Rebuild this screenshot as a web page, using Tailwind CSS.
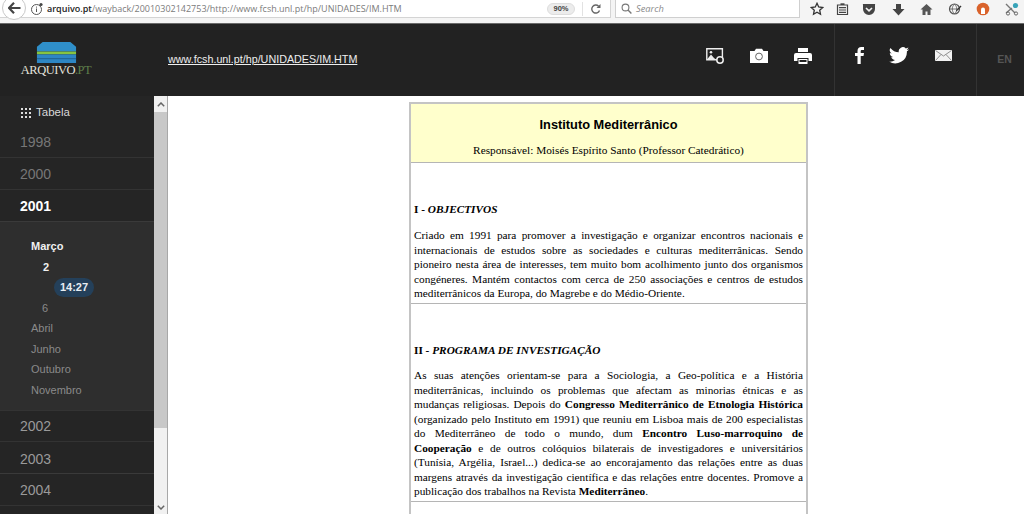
<!doctype html>
<html lang="pt">
<head>
<meta charset="utf-8">
<script src="https://cdn.jsdelivr.net/npm/@tailwindcss/browser@4"></script>
<title>Arquivo.pt</title>
</head>
<body class="w-[1024px] h-[514px] overflow-hidden bg-white font-['Liberation_Sans',sans-serif]">
<div class="flex flex-col h-[514px]">
  <!-- browser toolbar -->
  <div class="h-[24px] shrink-0 flex items-start bg-[#f4f4f4] border-b border-[#6a6a6a] relative">
    <div class="flex items-center h-[18px] w-[611px] bg-white border-b border-[#d4d4d4] border-r pl-[30px]">
      <svg class="w-[14px] h-[14px] shrink-0" viewBox="0 0 14 14"><circle cx="6.500" cy="7.500" r="5" fill="none" stroke="#555" stroke-width="1"/><rect x="6" y="6.500" width="1" height="3.500" fill="#555"/><rect x="6" y="4.600" width="1" height="1" fill="#555"/><circle cx="11" cy="2.500" r="1.600" fill="#444"/></svg>
      <span class="ml-[3px] text-[9px] text-[#7b7b7b] whitespace-nowrap font-['Open_Sans',sans-serif]"><span class="text-[#222] font-semibold">arquivo.pt</span>/wayback/20010302142753/http://www.fcsh.unl.pt/hp/UNIDADES/IM.HTM</span>
      <div class="ml-auto flex items-center">
        <span class="w-[28px] h-[12px] rounded-full bg-[#ececec] border border-[#ddd] text-[7.500px] leading-[10px] text-center text-[#444] font-bold">90%</span>
        <span class="w-px h-[14px] bg-[#e2e2e2] ml-[7px]"></span>
        <svg class="w-[12px] h-[12px] ml-[7px] mr-[8px]" viewBox="0 0 12 12"><path d="M9.500 7.500A4 4 0 1 1 8.600 3.200" fill="none" stroke="#666" stroke-width="1.400"/><path d="M10.500 1v4h-4z" fill="#666"/></svg>
      </div>
    </div>
    <div class="ml-[4px] flex items-center h-[18px] w-[185px] bg-white border border-t-0 border-[#cfcfcf] pl-[5px]">
      <svg class="w-[11px] h-[11px] shrink-0" viewBox="0 0 11 11"><circle cx="4.500" cy="4.500" r="3.400" fill="none" stroke="#777" stroke-width="1.100"/><path d="M7 7l3.400 3.400" stroke="#777" stroke-width="1.400"/></svg>
      <span class="ml-[4px] text-[9.300px] italic text-[#8a8a8a] font-['Open_Sans',sans-serif]">Search</span>
    </div>
    <div class="flex items-center h-[18px] pl-[10px]">
      <svg class="w-[14px] h-[14px]" viewBox="0 0 14 14"><path d="M7 1.300l1.700 3.700 4 .5-3 2.700.8 4L7 10.200l-3.500 2 .8-4-3-2.700 4-.5z" fill="none" stroke="#333" stroke-width="1.300"/></svg>
      <svg class="ml-[12px] w-[13px] h-[14px]" viewBox="0 0 13 14"><path d="M1.500 3h10v9.500h-10zM3 5.600h7M3 8h7M3 10.300h7" fill="none" stroke="#444" stroke-width="1.200"/><path d="M4.500 1.300h4V3h-4z" fill="#444"/></svg>
      <svg class="ml-[13px] w-[14px] h-[13px]" viewBox="0 0 14 13"><path d="M1 1h12a1 1 0 0 1 0 1v4a6 6 0 0 1-12 0V2a1 1 0 0 1 0-1z" fill="#444"/><path d="M4 5l3 2.800L10 5" fill="none" stroke="#f4f4f4" stroke-width="1.600"/></svg>
      <svg class="ml-[16px] w-[13px] h-[13px]" viewBox="0 0 13 13"><path d="M4 1h5v5h3.500l-6 6.500L.5 6H4z" fill="#444"/></svg>
      <svg class="ml-[15px] w-[13px] h-[13px]" viewBox="0 0 13 13"><path d="M6.500 1L.5 6.500h2V12h3V8.500h2V12h3V6.500h2z" fill="#555"/></svg>
      <svg class="ml-[15px] w-[14px] h-[14px]" viewBox="0 0 14 14"><circle cx="6.500" cy="7" r="5" fill="none" stroke="#555" stroke-width="1.200"/><path d="M1.500 7h10M6.500 2c-3 3-3 7 0 10M6.500 2c3 3 3 7 0 10" fill="none" stroke="#555" stroke-width=".8"/><path d="M8 8.500l4.500-5 1 1-5 5z" fill="#333"/></svg>
      <svg class="ml-[14px] w-[14px] h-[14px]" viewBox="0 0 14 14"><circle cx="7" cy="7" r="6.300" fill="#d9622b"/><path d="M5 12V7.500a2 2 0 1 1 4 0V12z" fill="#fff"/></svg>
      <svg class="ml-[15px] w-[14px] h-[14px]" viewBox="0 0 14 14"><circle cx="10.500" cy="3.500" r="2.600" fill="#38a3b8"/><path d="M1 2l9 9M1 11l6-5" stroke="#777" stroke-width="1.400"/><circle cx="3" cy="11.500" r="1.600" fill="none" stroke="#666"/><circle cx="11" cy="11.500" r="1.600" fill="none" stroke="#666"/></svg>
    </div>
    <div class="absolute left-[2px] top-[-4px] w-[24px] h-[24px] rounded-full bg-white border border-[#c8c8c8] flex items-center justify-center">
      <svg class="w-[13px] h-[12px]" viewBox="0 0 13 12"><path d="M6 .8L1 6l5 5.200M1.500 6H12.500" fill="none" stroke="#444" stroke-width="2.200"/></svg>
    </div>
  </div>

  <!-- archive header -->
  <div class="h-[72px] shrink-0 flex bg-[#222222]">
    <div class="w-[168px] shrink-0 flex flex-col items-center pt-[18px] pr-[56px]">
      <svg class="w-[41px] h-[21px] shrink-0" viewBox="0 0 41 22"><path d="M6 0h29l6 5v5H0V5z" fill="#2f8fc9"/><rect y="10" width="41" height="3" fill="#86c440"/><rect y="13" width="41" height="9" fill="#2d86c4"/><rect y="17" width="41" height="1" fill="#1f5e8c"/></svg>
      <span class="text-[12.500px] leading-[15px] tracking-[-0.5px] text-[#e2e2dc] whitespace-nowrap font-['Liberation_Serif',serif]">ARQUIVO<span class="text-[#5f7f4a]">.PT</span></span>
    </div>
    <div class="flex-1 pt-[27px]">
      <a class="text-[10.750px] leading-[16px] text-[#eeeeee] underline block">www.fcsh.unl.pt/hp/UNIDADES/IM.HTM</a>
    </div>
    <div class="shrink-0 flex items-center gap-[26px] pb-[9px] mr-[22px]">
      <svg class="w-[18px] h-[16px] shrink-0" viewBox="0 0 18 16"><path d="M.8.800h15.600v11H.8z" fill="none" stroke="#eee" stroke-width="1.400"/><path d="M1 11.500l4-5 3 3.500 2 1.500z" fill="#eee"/><circle cx="5" cy="4.300" r="1.300" fill="#eee"/><circle cx="14" cy="12" r="3.200" fill="#222" stroke="#eee" stroke-width="1.500"/></svg>
      <svg class="w-[18px] h-[15px] shrink-0" viewBox="0 0 18 15"><path d="M0 3h4.500L6 .8h6L13.500 3H18v12H0z" fill="#fff"/><circle cx="9" cy="8.500" r="3.400" fill="none" stroke="#666" stroke-width="1"/></svg>
      <svg class="w-[18px] h-[16px] shrink-0" viewBox="0 0 18 16"><path d="M4 0h10v4H4z" fill="#fff"/><path d="M2 5h14a2 2 0 0 1 2 2v6h-3.500V10h-11v3H0V7a2 2 0 0 1 2-2z" fill="#fff"/><path d="M4.500 11h9v5h-9z" fill="#fff"/><path d="M5.500 12h7v2h-7z" fill="#222"/></svg>
    </div>
    <div class="w-[142px] shrink-0 border-l border-[#333] flex items-center pb-[9px] pl-[20px]">
      <svg class="w-[9px] h-[17px] shrink-0" viewBox="0 0 9 17"><path d="M2.500 17V9H0V6h2.500V4c0-2.600 1.500-4 3.700-4H9v3H7c-.9 0-1.300.5-1.300 1.300V6H9l-.5 3H5.700v8z" fill="#fff"/></svg>
      <svg class="ml-[25px] w-[20px] h-[17px] shrink-0" viewBox="0 0 24 20"><path d="M24 2.400a9.800 9.800 0 0 1-2.800.8A5 5 0 0 0 23.300.5a9.800 9.800 0 0 1-3.100 1.200 4.900 4.900 0 0 0-8.400 4.500A14 14 0 0 1 1.700.9a4.900 4.900 0 0 0 1.500 6.600 4.900 4.900 0 0 1-2.200-.6 4.900 4.900 0 0 0 3.900 4.900 4.900 4.900 0 0 1-2.200.1 4.900 4.900 0 0 0 4.600 3.400A9.900 9.900 0 0 1 0 17.300 14 14 0 0 0 21.500 4.900c1-.7 1.800-1.500 2.500-2.500z" fill="#fff"/></svg>
      <svg class="ml-[26px] w-[17px] h-[11px] shrink-0" viewBox="0 0 17 11"><rect width="17" height="11" fill="#f2f2f2"/><path d="M.5.500l8 5.500 8-5.500M.5 10.500l5.500-6M16.500 10.500l-5.500-6" fill="none" stroke="#777" stroke-width=".8"/></svg>
    </div>
    <div class="w-[48px] shrink-0 border-l border-[#333] text-center pl-[8px] pt-[29px] text-[10.500px] leading-[13px] font-bold text-[#555]">EN</div>
  </div>

  <!-- body -->
  <div class="flex-1 min-h-0 flex overflow-hidden">
    <!-- sidebar -->
    <div class="w-[154px] shrink-0 bg-[#252525] flex flex-col text-[#8a8a8a]">
      <div class="h-[32px] flex items-center pl-[21px] pt-[1px] text-[11.500px] text-[#d8d8d8]">
        <svg class="w-[10px] h-[10px] mr-[5px]" viewBox="0 0 10 10" fill="#ddd"><rect x="0" y="0" width="2" height="2"/><rect x="4" y="0" width="2" height="2"/><rect x="8" y="0" width="2" height="2"/><rect x="0" y="4" width="2" height="2"/><rect x="4" y="4" width="2" height="2"/><rect x="8" y="4" width="2" height="2"/><rect x="0" y="8" width="2" height="2"/><rect x="4" y="8" width="2" height="2"/><rect x="8" y="8" width="2" height="2"/></svg>
        Tabela
      </div>
      <div class="h-[30px] flex items-center pl-[20px] pb-[1px] text-[14px] text-[#777] border-b border-[#333]">1998</div>
      <div class="h-[32px] flex items-center pl-[20px] pt-[2px] text-[14px] text-[#777] border-b border-[#333]">2000</div>
      <div class="h-[32px] flex items-center pl-[20px] pt-[2px] text-[14px] font-bold text-white border-b border-[#3a3a3a]">2001</div>
      <div class="h-[188px] shrink-0 bg-[#2e2e2e] pt-[14px] text-[11px] leading-[20.500px]">
        <div class="pl-[31px] font-bold text-[#f0f0f0]">Março</div>
        <div class="pl-[43px] font-bold text-[#f0f0f0]">2</div>
        <div class="pl-[54px] h-[20.500px] flex items-center"><span class="w-[40px] h-[19px] rounded-full bg-[#24405a] text-[#e8eef3] font-bold text-center leading-[19px]">14:27</span></div>
        <div class="pl-[42px]">6</div>
        <div class="pl-[31px]">Abril</div>
        <div class="pl-[31px]">Junho</div>
        <div class="pl-[31px]">Outubro</div>
        <div class="pl-[31px]">Novembro</div>
      </div>
      <div class="h-[32px] shrink-0 flex items-center pl-[20px] text-[14px] text-[#9a9a9a] border-y border-[#333]">2002</div>
      <div class="h-[32px] shrink-0 flex items-center pl-[20px] pt-[3px] text-[14px] text-[#9a9a9a] border-b border-[#3a3a3a]">2003</div>
      <div class="h-[32px] shrink-0 flex items-center pl-[20px] pt-[2px] text-[14px] text-[#9a9a9a] border-b border-[#333]">2004</div>
    </div>
    <!-- scrollbar -->
    <div class="w-[14px] shrink-0 bg-[#f1f1f1] border-r border-[#a8a8a8] flex flex-col items-center">
      <div class="h-[16px] w-full flex items-center justify-center shrink-0 bg-[#f1f1f1]">
        <svg class="w-[8px] h-[5px]" viewBox="0 0 8 5"><path d="M.8 4.200L4 1l3.200 3.200" fill="none" stroke="#666" stroke-width="1.500"/></svg>
      </div>
      <div class="h-[316px] w-full bg-[#c8c8c8] shrink-0"></div>
      <div class="flex-1"></div>
      <div class="h-[14px] w-full flex items-center justify-center shrink-0">
        <svg class="w-[8px] h-[5px]" viewBox="0 0 8 5"><path d="M.8.800L4 4l3.200-3.200" fill="none" stroke="#666" stroke-width="1.500"/></svg>
      </div>
    </div>
    <!-- document -->
    <div class="flex-1 min-w-0 overflow-hidden pt-[6px] pl-[241px]">
      <div class="w-[399px] border-x-2 border-t-2 border-[#c4c4c4] h-[600px] font-['Liberation_Serif',serif] text-[11.300px] leading-[14.500px] text-black">
        <div class="h-[59px] bg-[#ffffcc] border-b border-[#b5b5b5] text-center">
          <div class="pt-[13px] h-[38px] font-['Liberation_Sans',sans-serif] font-bold text-[12.800px] leading-[16px] text-black">Instituto Mediterrânico</div>
          <div class="leading-[16px]">Responsável: Moisés Espírito Santo (Professor Catedrático)</div>
        </div>
        <div class="pl-[3px] pr-[3px] border-b border-[#b5b5b5] h-[141px]">
          <div class="pt-[39px] h-[65px] font-bold">I - <i>OBJECTIVOS</i></div>
          <div class="[&>span]:block [&>span]:text-justify [&>span]:[text-align-last:justify]">
            <span>Criado em 1991 para promover a investigação e organizar encontros nacionais e</span>
            <span>internacionais de estudos sobre as sociedades e culturas mediterrânicas. Sendo</span>
            <span>pioneiro nesta área de interesses, tem muito bom acolhimento junto dos organismos</span>
            <span>congéneres. Mantém contactos com cerca de 250 associações e centros de estudos</span>
          </div>
          <div>mediterrânicos da Europa, do Magrebe e do Médio-Oriente.</div>
        </div>
        <div class="pl-[3px] pr-[3px] border-b border-[#b5b5b5] h-[198px]">
          <div class="pt-[39px] h-[64px] font-bold">II - <i>PROGRAMA DE INVESTIGAÇÃO</i></div>
          <div class="[&>span]:block [&>span]:text-justify [&>span]:[text-align-last:justify]">
            <span>As suas atenções orientam-se para a Sociologia, a Geo-política e a História</span>
            <span>mediterrânicas, incluindo os problemas que afectam as minorias étnicas e as</span>
            <span>mudanças religiosas. Depois do <b>Congresso Mediterrânico de Etnologia Histórica</b></span>
            <span>(organizado pelo Instituto em 1991) que reuniu em Lisboa mais de 200 especialistas</span>
            <span>do Mediterrâneo de todo o mundo, dum <b>Encontro Luso-marroquino de</b></span>
            <span><b>Cooperação</b> e de outros colóquios bilaterais de investigadores e universitários</span>
            <span>(Tunísia, Argélia, Israel...) dedica-se ao encorajamento das relações entre as duas</span>
            <span>margens através da investigação científica e das relações entre docentes. Promove a</span>
          </div>
          <div>publicação dos trabalhos na Revista <b>Mediterrâneo</b>.</div>
        </div>
      </div>
    </div>
  </div>
</div>
</body>
</html>
